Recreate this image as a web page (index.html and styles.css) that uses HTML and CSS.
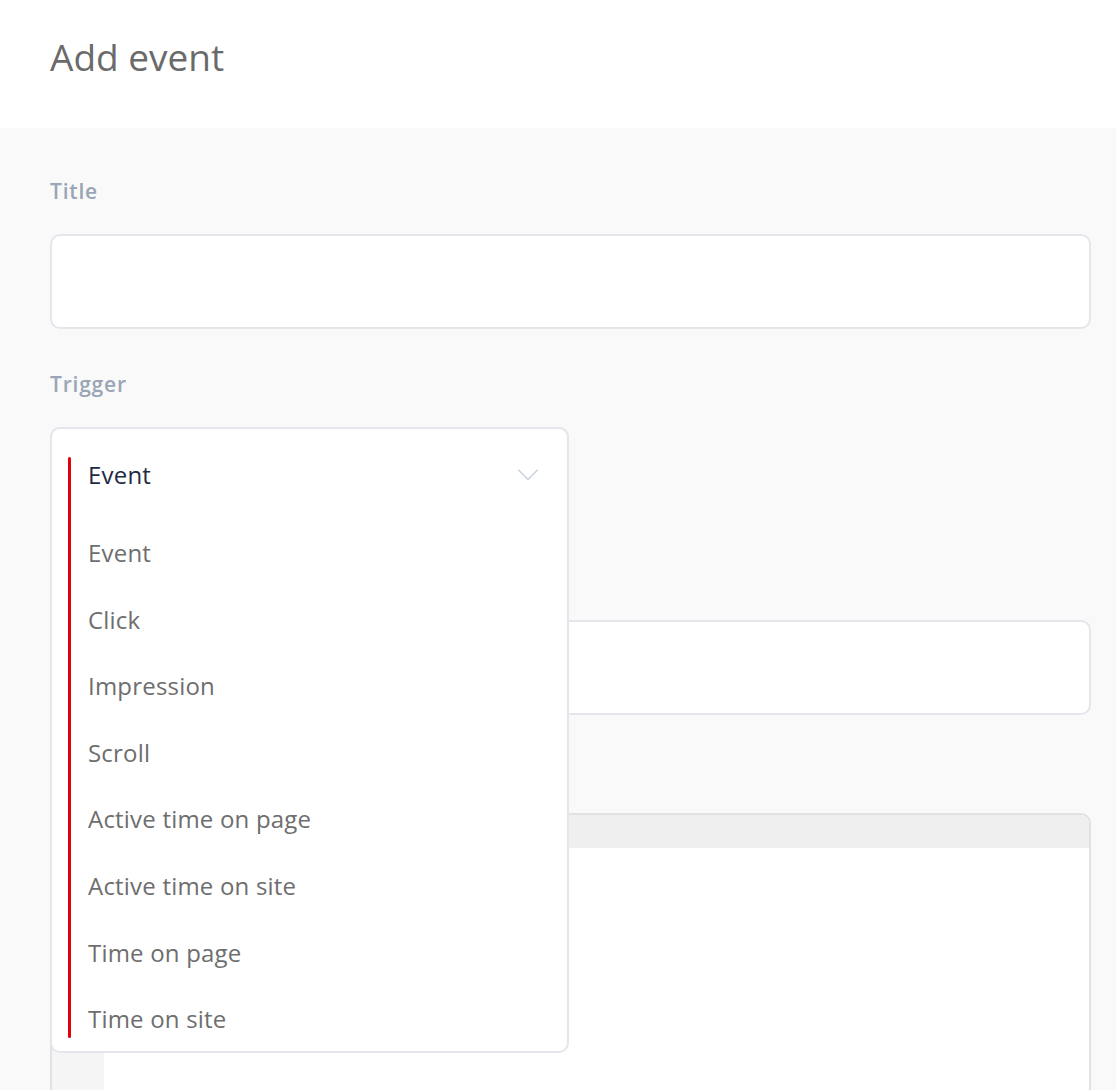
FILE: index.html
```html
<!DOCTYPE html>
<html>
<head>
<meta charset="utf-8">
<link rel="stylesheet" href="styles.css">
</head>
<body>
<header class="top">
  <h1 class="page-title">Add event</h1>
</header>
<main class="form">
  <div class="field">
    <label class="label">Title</label>
    <div class="input"></div>
  </div>
  <div class="field">
    <label class="label">Trigger</label>
    <div class="input select-closed"></div>
    <div class="dropdown">
      <span class="focus-bar"></span>
      <div class="selected">
        <span>Event</span>
        <svg class="chevron" width="22" height="14" viewBox="0 0 22 14"><path d="M1.5 2 L11 11.5 L20.5 2" fill="none" stroke="#ccd3dd" stroke-width="1.6"/></svg>
      </div>
      <ul class="options">
        <li>Event</li>
        <li>Click</li>
        <li>Impression</li>
        <li>Scroll</li>
        <li>Active time on page</li>
        <li>Active time on site</li>
        <li>Time on page</li>
        <li>Time on site</li>
      </ul>
    </div>
  </div>
  <div class="field">
    <div class="label label-hidden"></div>
    <div class="input"></div>
  </div>
  <div class="field field-editor">
    <div class="label label-hidden"></div>
    <div class="editor">
      <div class="editor-head"></div>
      <div class="editor-body">
        <div class="gutter"></div>
        <div class="code"></div>
      </div>
    </div>
  </div>
</main>
</body>
</html>
```

FILE: styles.css
```css
* { box-sizing: border-box; }
html, body { margin: 0; padding: 0; }
body {
  font-family: "Open Sans", Lato, sans-serif;
  background: #f9f9f9;
  height: 1090px;
  overflow: hidden;
}
.top {
  background: #fff;
  height: 128px;
  padding: 35px 50px 0;
}
.page-title {
  margin: 0;
  font-size: 37px;
  font-weight: 400;
  line-height: 44px;
  color: #6a6a6a;
}
.form {
  padding: 49px 25px 0 50px;
}
.field {
  position: relative;
  margin-bottom: 41px;
}
.field-editor {
  margin-top: 2px;
}
.label {
  display: block;
  height: 28px;
  font-size: 21px;
  line-height: 28px;
  font-weight: 600;
  letter-spacing: 0.8px;
  color: #9aa5b5;
  margin-bottom: 29px;
}
.input {
  height: 95px;
  background: #fff;
  border: 2px solid #e3e7ec;
  border-radius: 10px;
}
.select-closed {
  width: 519px;
}
.dropdown {
  position: absolute;
  left: 0;
  top: 57px;
  width: 519px;
  height: 626px;
  background: #fff;
  border: 2px solid #e3e7ec;
  border-radius: 10px;
  z-index: 2;
}
.focus-bar {
  position: absolute;
  left: 16px;
  top: 28px;
  bottom: 13px;
  width: 3px;
  background: #e3000b;
  border-radius: 2px;
}
.selected {
  display: flex;
  justify-content: space-between;
  align-items: flex-start;
  padding: 32px 28px 0 36px;
  height: 110px;
  font-size: 24px;
  line-height: 28px;
  letter-spacing: 0.2px;
  color: #1f2a45;
}
.chevron { margin-top: 7px; }
.options {
  list-style: none;
  margin: 0;
  padding: 0 0 0 36px;
}
.options li {
  font-size: 24px;
  line-height: 28px;
  letter-spacing: 0.2px;
  height: 66.6px;
  color: #6e6e6e;
}
.editor {
  border: 2px solid #e2e2e2;
  border-bottom: 0;
  border-radius: 10px 10px 0 0;
  background: #fff;
  height: 400px;
  overflow: hidden;
}
.editor-head {
  height: 33px;
  background: #efefef;
}
.editor-body {
  display: flex;
  height: 100%;
}
.gutter {
  width: 52px;
  background: #f5f5f5;
}
.code { flex: 1; }
```
